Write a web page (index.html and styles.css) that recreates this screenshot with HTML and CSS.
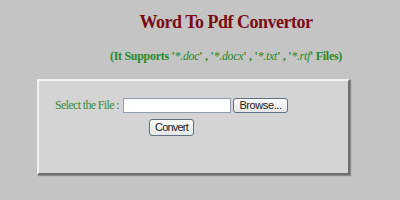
FILE: index.html
```html
<!DOCTYPE html>
<html>
<head>
<meta charset="utf-8">
<link rel="stylesheet" href="styles.css">
</head>
<body>
<div class="page">
  <h1 class="title">Word To Pdf Convertor</h1>
  <p class="sub">(It Supports '<i>*.doc</i>' , '<i>*.docx</i>' , '<i>*.txt</i>' , '<i>*.rtf</i>' Files)</p>
  <div class="panel">
    <div class="row">
      <label class="label">Select the File :</label>
      <input class="file" type="text">
      <button class="btn browse">Browse...</button>
    </div>
    <div class="row2">
      <button class="btn convert">Convert</button>
    </div>
  </div>
</div>
</body>
</html>
```
FILE: styles.css
```css
html, body {
  margin: 0;
  padding: 0;
  background: #c4c4c4;
}
.page {
  width: 400px;
  height: 200px;
  overflow: hidden;
  font-family: "Liberation Serif", "Times New Roman", serif;
}
.title {
  margin: 0;
  padding: 12px 0 0 52px;
  text-align: center;
  font-size: 18px;
  line-height: 21px;
  letter-spacing: -0.5px;
  font-weight: bold;
  color: #7b0c14;
}
.sub {
  margin: 16px 0 0 0;
  padding-left: 52px;
  text-align: center;
  font-size: 12px;
  line-height: 15px;
  font-weight: bold;
  color: #288a28;
  letter-spacing: -0.3px;
}
.sub i {
  font-weight: normal;
}
.panel {
  box-sizing: border-box;
  margin: 15px 0 0 37px;
  width: 313px;
  height: 96px;
  background: #d4d4d4;
  border-top: 2px solid #f2f2f2;
  border-left: 2px solid #f2f2f2;
  border-right: 2px solid #6e6e6e;
  border-bottom: 2px solid #6e6e6e;
  box-shadow: 1px 1px 1px #8a8a8a;
  padding: 17px 0 0 16px;
}
.row {
  display: flex;
  align-items: center;
  height: 15px;
}
.label {
  font-size: 12px;
  letter-spacing: -0.65px;
  color: #3a8a3a;
  width: 68px;
  white-space: nowrap;
}
.file {
  box-sizing: border-box;
  width: 108px;
  height: 15px;
  margin: 0;
  padding: 0;
  border: 1px solid #8f9fb0;
  background: #fff;
}
.btn {
  box-sizing: border-box;
  padding: 0;
  font-family: "Liberation Sans", Arial, sans-serif;
  font-size: 11px;
  color: #222;
  background: linear-gradient(#fbfbfb, #e6e6e6);
  border: 1px solid #5f7186;
  border-radius: 3px;
}
.browse {
  margin-left: 2px;
  width: 55px;
  height: 15px;
  line-height: 13px;
  letter-spacing: -0.4px;
}
.row2 {
  margin-top: 4px;
  padding-left: 94px;
}
.convert {
  width: 45px;
  height: 17px;
  line-height: 15px;
  letter-spacing: -0.8px;
}
```
